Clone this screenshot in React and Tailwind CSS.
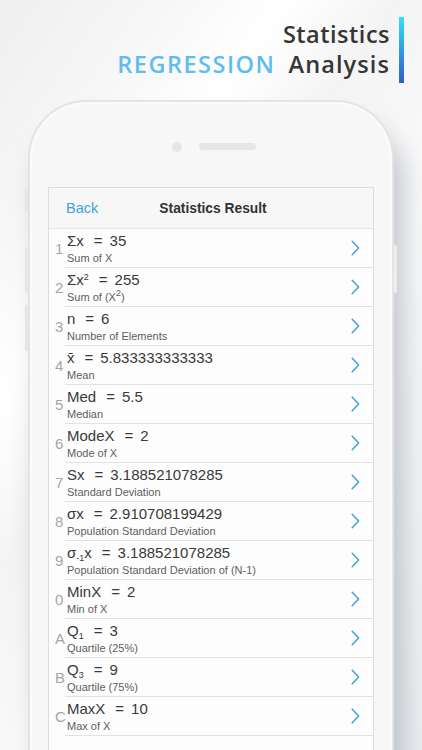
import React from "react";

const Chevron = () => (
  <svg width="9" height="16" viewBox="0 0 9 16" fill="none" className="shrink-0">
    <path d="M1.2 1.2 L7.6 8 L1.2 14.8" stroke="#3fa2db" strokeWidth="1.5" strokeLinecap="round" strokeLinejoin="round" />
  </svg>
);

const Sup = ({ children }) => (
  <span className="relative top-[-5px] text-[9px] leading-none">{children}</span>
);
const Sub = ({ children }) => (
  <span className="relative top-[3px] text-[9px] leading-none">{children}</span>
);

const rows = [
  { i: "1", name: <>Σx</>, value: "35", desc: <>Sum of X</> },
  { i: "2", name: <>Σx<Sup>2</Sup></>, value: "255", desc: <>Sum of (X<Sup>2</Sup>)</> },
  { i: "3", name: <>n</>, value: "6", desc: <>Number of Elements</> },
  { i: "4", name: <>x̄</>, value: "5.833333333333", desc: <>Mean</> },
  { i: "5", name: <>Med</>, value: "5.5", desc: <>Median</> },
  { i: "6", name: <>ModeX</>, value: "2", desc: <>Mode of X</> },
  { i: "7", name: <>Sx</>, value: "3.188521078285", desc: <>Standard Deviation</> },
  { i: "8", name: <>σx</>, value: "2.910708199429", desc: <>Population Standard Deviation</> },
  { i: "9", name: <>σ<Sub>-1</Sub>x</>, value: "3.188521078285", desc: <>Population Standard Deviation of (N-1)</> },
  { i: "0", name: <>MinX</>, value: "2", desc: <>Min of X</> },
  { i: "A", name: <>Q<Sub>1</Sub></>, value: "3", desc: <>Quartile (25%)</> },
  { i: "B", name: <>Q<Sub>3</Sub></>, value: "9", desc: <>Quartile (75%)</> },
  { i: "C", name: <>MaxX</>, value: "10", desc: <>Max of X</> },
];

const Row = ({ r }) => (
  <div className="flex h-[39px] bg-[#fdfdfd]">
    <div className="flex w-[16px] shrink-0 items-center pl-[6px] pt-[2px] text-[15px] text-[#a6a6a6]">{r.i}</div>
    <div className="flex flex-1 items-center border-b border-[#e3e3e3] pr-[13px]">
      <div className="flex-1 self-start pl-[2px] pt-[3px]">
        <div className="flex whitespace-nowrap text-[15px] leading-[18px] text-[#3a3a3a]">
          <span>{r.name}</span>
          <span className="ml-[10px] mr-[7px]">=</span>
          <span>{r.value}</span>
        </div>
        <div className="mt-[2px] whitespace-nowrap text-[11px] leading-[13px] text-[#5e5e5e]">{r.desc}</div>
      </div>
      <Chevron />
    </div>
  </div>
);

export default function App() {
  return (
    <div
      className="relative h-[750px] w-[422px] overflow-hidden bg-[linear-gradient(125deg,#efeff0_0%,#f7f7f7_18%,#ffffff_30%,#f4f4f5_42%,#fafafa_60%,#eceef0_100%)]"
      style={{ fontFamily: '"Liberation Sans", Arial, sans-serif' }}
    >
      {/* Header */}
      <div className="flex h-[100px] justify-end pr-[18px] pt-[17px]">
        <div
          className="flex flex-col items-end pr-[9px] pt-[2px] text-[23.5px] font-semibold leading-[30px] text-[#363636]"
          style={{ fontFamily: '"Open Sans", "Noto Sans", sans-serif' }}
        >
          <div className="tracking-[0.5px]">Statistics</div>
          <div className="flex">
            <span className="tracking-[1.5px] text-[#5fbdf0]">REGRESSION</span>
            <span className="ml-[13px] tracking-[1.1px]">Analysis</span>
          </div>
        </div>
        <div className="h-[66px] w-[5px] bg-[linear-gradient(180deg,#33e0f4_0%,#2f8fe0_60%,#2f5ec6_100%)]" />
      </div>

      {/* Phone */}
      <div className="relative ml-[28px] w-[366px]">
        {/* side buttons */}
        <div className="absolute left-[-3px] top-[88px] h-[24px] w-[3px] rounded-l-[2px] bg-[#e6e6e6]" />
        <div className="absolute left-[-3px] top-[147px] h-[46px] w-[3px] rounded-l-[2px] bg-[#e6e6e6]" />
        <div className="absolute left-[-3px] top-[205px] h-[46px] w-[3px] rounded-l-[2px] bg-[#e6e6e6]" />
        <div className="absolute right-[-3px] top-[145px] h-[48px] w-[3px] rounded-r-[2px] bg-[#ededed]" />

        <div className="h-[700px] rounded-t-[58px] border-2 border-b-0 border-[#e4e4e4] bg-[#f7f7f7] shadow-[10px_24px_26px_rgba(120,132,148,0.42),inset_0_0_0_2px_#fbfbfb]">
          {/* top bezel */}
          <div className="flex h-[85px] items-center justify-center gap-[17px] pl-[6px] pt-[4px]">
            <div className="h-[10px] w-[10px] rounded-full bg-[#e6e6e6]" />
            <div className="h-[7px] w-[57px] rounded-full bg-[#e6e6e6]" />
          </div>

          {/* screen */}
          <div className="mx-[18px] h-[620px] border border-b-0 border-[#dddddd] bg-[#fdfdfd]">
            <div className="grid h-[41px] grid-cols-[1fr_auto_1fr] items-center border-b border-[#e6e6e6] bg-[#f7f7f7] pt-[2px]">
              <div className="pl-[17px] text-[14.5px] text-[#3fa2db]">Back</div>
              <div className="pl-[4px] text-[13.8px] font-bold text-[#333333]">Statistics Result</div>
              <div />
            </div>
            {rows.map((r) => (
              <Row key={r.i} r={r} />
            ))}
          </div>
        </div>
      </div>
    </div>
  );
}
